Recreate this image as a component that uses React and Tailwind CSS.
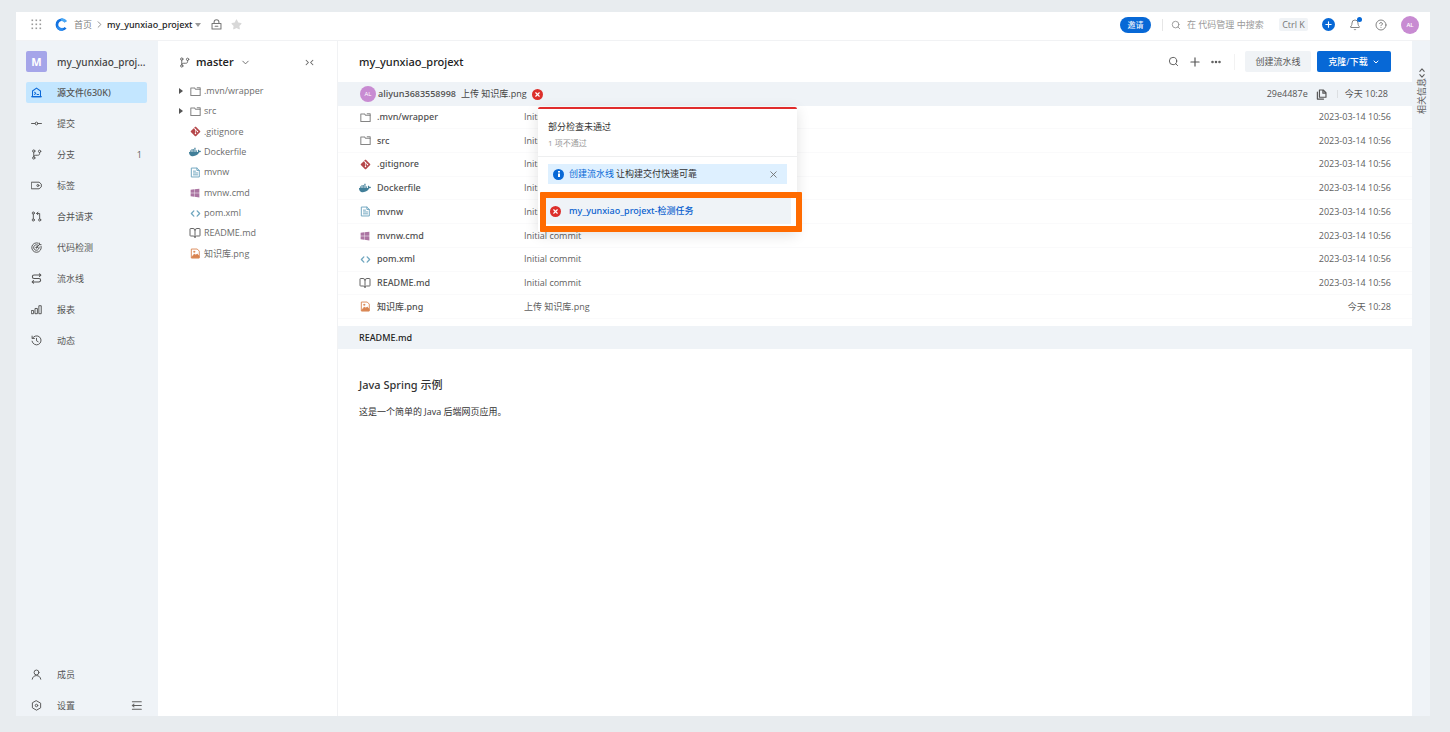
import React from "react";
import {
  BookOpen, ChevronDown, ChevronRight, Search, Plus, X, CircleHelp, Bell, Ellipsis,
} from "lucide-react";
import { FaDocker, FaGitAlt, FaStar, FaWindows } from "react-icons/fa6";

const strong = "font-['Noto_Sans','Noto_Sans_CJK_SC',sans-serif] font-medium";

function Icon({ size = 11, width = 1.4, className = "", children }) {
  return (
    <svg
      width={size}
      height={size}
      viewBox="0 0 16 16"
      fill="none"
      stroke="currentColor"
      strokeWidth={width}
      strokeLinecap="round"
      strokeLinejoin="round"
      className={`shrink-0 ${className}`}
      aria-hidden="true"
    >
      {children}
    </svg>
  );
}

const SourceIcon = () => (
  <Icon width={1.5} className="text-[#0b68d8]">
    <path d="M2.2 5.800 8 1.600l5.800 4.200V14H2.200z" />
    <path d="M5.200 7.600 7 9.200l-1.800 1.600M8.800 11h2.200" />
    <path d="M1 14h14" />
  </Icon>
);
const CommitIcon = () => (
  <Icon>
    <circle cx="8" cy="8" r="2" />
    <path d="M.8 8H6M10 8h5.2" />
  </Icon>
);
const BranchIcon = () => (
  <Icon>
    <circle cx="4" cy="3" r="1.7" />
    <circle cx="12.500" cy="3.4" r="1.7" />
    <circle cx="4" cy="13" r="1.7" />
    <path d="M4 4.700v6.600M12.500 5.100v1.400c0 2-1 2.600-2.800 2.600H6.900C5.100 9.100 4 9.900 4 11.300" />
  </Icon>
);
const TagIcon = () => (
  <Icon>
    <path d="M1 3.2h10.8L15 6v4l-3.2 2.8H1z" />
    <circle cx="10" cy="8" r="1.5" />
  </Icon>
);
const MergeIcon = () => (
  <Icon>
    <circle cx="3.4" cy="3" r="1.6" />
    <circle cx="3.4" cy="13" r="1.6" />
    <circle cx="12.6" cy="13" r="1.6" />
    <path d="M3.4 4.6v6.8M12.6 11.4V3.6H8.4M10.2 1.6l-2 2 2 2" />
  </Icon>
);
const ScanIcon = () => (
  <Icon>
    <path d="M10.500 1.600a6.900 6.900 0 1 0 4.200 4.600" />
    <path d="M9.8 4.500a4 4 0 1 0 2 2.800" />
    <path d="m8 8 4.200-4.200M12.200 3.800V1.600M12.200 3.800h2.400" />
    <circle cx="8" cy="8" r="1" />
  </Icon>
);
const PipelineIcon = () => (
  <Icon width={1.6}>
    <path d="M14 3H4.5a2.5 2.5 0 0 0 0 5h7a2.5 2.5 0 0 1 0 5H2" />
    <path d="M12.3 1.2 14.2 3l-1.9 1.8M3.7 11.2 1.8 13l1.9 1.8" />
  </Icon>
);
const ChartIcon = () => (
  <Icon width={1.4}>
    <path d="M1 9.500h2.800v4.600H1zM6.400 6.500h2.900v7.600H6.400zM12 2.500h2.900v11.600H12z" />
  </Icon>
);
const HistoryIcon = () => (
  <Icon>
    <path d="M2.2 4.6A6.6 6.6 0 1 1 1.5 9" />
    <path d="M1.6 1.6v3.4H5M8 4.8v3.6l2.4 1.4" />
  </Icon>
);
const MemberIcon = () => (
  <Icon>
    <circle cx="8" cy="5" r="3.5" />
    <path d="M1.8 14.8c.5-3.2 2.8-5.2 6.2-5.2s5.700 2 6.200 5.200" />
  </Icon>
);
const SettingIcon = () => (
  <Icon>
    <path d="M8 1.200 14 4.600v6.800L8 14.800 2 11.400V4.600z" />
    <circle cx="8" cy="8" r="1.800" />
  </Icon>
);
const CollapseIcon = () => (
  <Icon width={1.500}>
    <path d="M2 2.500h13M3 8h12M2 13.500h13" />
    <path d="M4.200 5.600 1.200 8l3 2.400z" fill="currentColor" strokeWidth="0.500" />
  </Icon>
);
const FolderIcon = () => (
  <Icon width={1.500} className="text-[#858585]">
    <path d="M1.200 2.800h5.300l1.600 2h6.700v8.900H1.200z" />
    <path d="M10.500 2.400h4.300v2.400" />
  </Icon>
);
const DocIcon = () => (
  <Icon width={1.400} className="text-[#6fa6bf]">
    <path d="M2.500 1.500h7.500l3.500 3.500v9.500h-11z" />
    <path d="M10 1.500V5h3.500M5 6h3M5 8.700h6M5 11.400h6" />
  </Icon>
);
const XmlIcon = () => (
  <Icon width={1.900} className="text-[#6fa6bf]">
    <path d="M5.600 4.200 2 8l3.600 3.800M10.400 4.200 14 8l-3.600 3.800" />
  </Icon>
);
const ImageIcon = () => (
  <Icon width={1.300} className="text-[#d98350]">
    <path d="M2.500 1.500h8l3 3v10h-11z" />
    <path d="M3 12.800 6.500 8.600l2 2 2-1.800 2.600 3v2.300H3z" fill="currentColor" />
    <circle cx="6" cy="5.500" r="0.900" />
  </Icon>
);

const fileIcons = {
  folder: <FolderIcon />,
  git: <FaGitAlt size={11} className="text-[#b5474a]" />,
  docker: <FaDocker size={12} className="text-[#417f99]" />,
  doc: <DocIcon />,
  windows: <FaWindows size={10} className="text-[#ab75a2]" />,
  xml: <XmlIcon />,
  book: <BookOpen size={12} strokeWidth={2} className="text-[#666]" />,
  image: <ImageIcon />,
};

const files = [
  [".mvn/wrapper", "folder"],
  ["src", "folder"],
  [".gitignore", "git"],
  ["Dockerfile", "docker"],
  ["mvnw", "doc"],
  ["mvnw.cmd", "windows"],
  ["pom.xml", "xml"],
  ["README.md", "book"],
  ["知识库.png", "image"],
];

const menu = [
  ["源文件(630K)", SourceIcon],
  ["提交", CommitIcon],
  ["分支", BranchIcon, "1"],
  ["标签", TagIcon],
  ["合并请求", MergeIcon],
  ["代码检测", ScanIcon],
  ["流水线", PipelineIcon],
  ["报表", ChartIcon],
  ["动态", HistoryIcon],
];

function ErrorDot() {
  return (
    <span className="flex size-[11px] shrink-0 items-center justify-center rounded-full bg-[#dc2f2b] text-white">
      <X size={7} strokeWidth={4} />
    </span>
  );
}

function Header() {
  return (
    <header className="flex h-[29px] shrink-0 items-center border-b border-[#f1f2f4] bg-white pr-[11px] pb-[3px] pl-[15px]">
      <button type="button" aria-label="应用" className="text-[#999]">
        <svg width="11" height="11" viewBox="0 0 11 11" fill="currentColor">
          {[1, 5, 9].map((y) => [1, 5, 9].map((x) => <rect key={`${x}${y}`} x={x - 0.5} y={y - 0.5} width="1.600" height="1.600" />))}
        </svg>
      </button>
      <svg width="13" height="13" viewBox="0 0 24 24" fill="none" className="ml-[13px]" aria-hidden="true">
        <path d="M19.500 6.500A9 9 0 1 0 19.500 18" stroke="#1272e0" strokeWidth="5" />
        <path d="M11 3.200c4-.6 7 .8 9 4" stroke="#4aa8f5" strokeWidth="5" />
        <path d="M4.500 16c2 3.500 6 5.500 10 4.600" stroke="#2b8cf0" strokeWidth="5" />
      </svg>
      <nav className="ml-[6px] flex items-center">
        <a href="#home" className="text-[#808080]">首页</a>
        <ChevronRight size={11} className="mx-[2px] text-[#888]" />
        <button type="button" className={`flex items-center gap-[2px] text-[#222] ${strong}`}>
          my_yunxiao_projext
          <svg width="6" height="4" viewBox="0 0 6 4" fill="#999"><path d="M0 0h6L3 4z" /></svg>
        </button>
      </nav>
      <Icon width={1.500} className="ml-[10px] text-[#777]">
        <path d="M1.500 6.500h13v8h-13zM4.500 6.300V4.500a3.500 3.500 0 0 1 7 0v1.800M6 10.500h4" />
      </Icon>
      <button type="button" aria-label="收藏" className="ml-[9px] text-[#d8d8d8]"><FaStar size={11} /></button>

      <div className="ml-auto flex items-center">
        <button type="button" className="h-4 w-[31px] rounded-full bg-[#0768d6] text-[8px] text-white">邀请</button>
        <span className="mr-2 ml-[11px] h-3 w-px bg-[#e6e6e6]" />
        <label className="flex items-center">
          <Search size={10} className="text-[#8c8c8c]" />
          <input
            aria-label="搜索"
            placeholder="在 代码管理 中搜索"
            className="ml-[6px] w-[92px] bg-transparent outline-none placeholder:text-[#999]"
          />
        </label>
        <kbd className="h-[13px] w-[29px] rounded-xs bg-[#f0f3f6] text-center font-[inherit] leading-[13px] text-[#777]">Ctrl K</kbd>
        <button type="button" aria-label="新建" className="ml-[14px] flex size-[13px] items-center justify-center rounded-full bg-[#0768d6] text-white">
          <Plus size={9} strokeWidth={3} />
        </button>
        <button type="button" aria-label="通知" className="relative ml-[14px] text-[#777]">
          <Bell size={12} strokeWidth={1.800} />
          <span className="absolute -top-[2px] -right-[1px] size-[5px] rounded-full bg-[#0768d6]" />
        </button>
        <button type="button" aria-label="帮助" className="ml-[14px] text-[#777]"><CircleHelp size={12} strokeWidth={1.800} /></button>
        <span className="ml-[14px] flex size-[18px] items-center justify-center rounded-full bg-[#c88bd2] text-[6px] font-semibold text-white">AL</span>
      </div>
    </header>
  );
}

function MenuItem({ label, icon: Glyph, active, children }) {
  return (
    <div className={`flex h-[21px] items-center rounded-xs px-[5px] ${active ? "bg-[#c3e6ff]" : ""}`}>
      <a href="#menu" className={`flex flex-1 items-center gap-[15px] text-[#555] ${active ? strong : ""}`}>
        <Glyph />
        {label}
      </a>
      {children}
    </div>
  );
}

function Sidebar() {
  return (
    <aside className="flex w-[142px] shrink-0 flex-col bg-[#eff3f7] pt-[10px] pr-[11px] pl-[10px] text-[#606060]">
      <div className="mb-[10px] flex h-[21px] items-center gap-[10px]">
        <span className="flex size-[21px] items-center justify-center rounded-xs bg-[#a5a5e9] text-[11px] font-bold text-white">M</span>
        <span className={`text-[10px] whitespace-nowrap text-[#444] ${strong}`}>my_yunxiao_proj...</span>
      </div>
      <nav className="flex flex-col gap-[10px]">
        {menu.map(([label, icon, count], i) => (
          <MenuItem key={label} label={label} icon={icon} active={i === 0}>
            {count && <span>{count}</span>}
          </MenuItem>
        ))}
      </nav>
      <nav className="mt-auto flex flex-col gap-[10px]">
        <MenuItem label="成员" icon={MemberIcon} />
        <MenuItem label="设置" icon={SettingIcon}>
          <button type="button" aria-label="收起"><CollapseIcon /></button>
        </MenuItem>
      </nav>
    </aside>
  );
}

function Tree() {
  return (
    <section className="w-[180px] shrink-0 border-r border-[#f1f2f4]">
      <div className="flex h-10 items-center pt-[2px] pr-[23px] pl-[21px] text-[#666]">
        <BranchIcon />
        <button type="button" className="ml-[6px] flex items-center gap-[6px] text-[11px] font-semibold text-[#222]">
          master
          <ChevronDown size={11} className="text-[#666]" />
        </button>
        <button type="button" aria-label="收起目录" className="ml-auto">
          <Icon size={9} width={1.800}><path d="m2 4 4 4-4 4M14 4l-4 4 4 4" /></Icon>
        </button>
      </div>
      <ul className="grid h-[183px] auto-rows-fr">
        {files.map(([name, kind]) => (
          <li key={name} className="flex items-center pl-[21px] text-[#6c6c6c]">
            <span className="w-[10px]">
              {kind === "folder" && <svg width="4" height="6" viewBox="0 0 4 6" fill="#555"><path d="M0 0v6l4-3z" /></svg>}
            </span>
            <span className="mr-[3px] flex w-3 justify-center">{fileIcons[kind]}</span>
            <a href="#file">{name}</a>
          </li>
        ))}
      </ul>
    </section>
  );
}

function CheckPopup() {
  return (
    <div className="absolute top-[25px] left-[200px] z-10 w-[259px] rounded-xs border-t-2 border-[#e02b2b] bg-white shadow-[0_3px_14px_rgba(0,0,0,0.12)]">
      <div className="h-12 border-b border-[#eeeff0] pt-[10px] pl-[10px]">
        <p className="leading-[15px] text-[#333]">部分检查未通过</p>
        <p className="mt-[2px] text-[8px] leading-[14px] text-[#999]">1 项不通过</p>
      </div>
      <div className="mx-[10px] mt-[7px] flex h-5 items-center bg-[#def0ff] pr-2 pl-[5px] text-[#333]">
        <span className="flex size-[11px] items-center justify-center rounded-full bg-[#0768d6] text-white">
          <svg width="2" height="6" viewBox="0 0 2 6" fill="currentColor"><path d="M0 0h2v1.400H0zM0 2.400h2V6H0z" /></svg>
        </span>
        <a href="#pipeline" className="ml-[5px] text-[#0768d6]">创建流水线</a>
        <span className="ml-[2px]">让构建交付快速可靠</span>
        <button type="button" aria-label="关闭" className="ml-auto text-[#666]"><X size={11} strokeWidth={1.800} /></button>
      </div>
      <div className="mt-2 mr-[-5px] ml-[2px] rounded-[1px] border-[6px] border-[#ff6b00] bg-white pr-[5px] pb-[2px]">
        <div className="flex h-[26px] items-center gap-2 bg-[#eff3f7] pl-1">
          <ErrorDot />
          <a href="#task" className={`text-[#0b62cf] ${strong}`}>my_yunxiao_projext-检测任务</a>
        </div>
      </div>
    </div>
  );
}

function Main() {
  return (
    <main className="min-w-0 flex-1">
      <div className="flex h-[41px] items-center pr-[21px] pl-[21px]">
        <h1 className={`text-[11px] text-[#222] ${strong}`}>my_yunxiao_projext</h1>
        <div className="ml-auto flex items-center text-[#555]">
          <button type="button" aria-label="搜索文件"><Search size={11} /></button>
          <button type="button" aria-label="添加" className="ml-[9px]"><Plus size={14} /></button>
          <button type="button" aria-label="更多" className="ml-2"><Ellipsis size={12} strokeWidth={3} /></button>
          <span className="mr-[10px] ml-3 h-4 w-px bg-[#f2f2f2]" />
          <button type="button" className="h-[21px] w-[66px] rounded-xs bg-[#f0f3f6]">创建流水线</button>
          <button type="button" className="ml-[6px] flex h-[21px] w-[74px] items-center justify-center gap-1 rounded-xs bg-[#0768d6] font-medium text-white">
            克隆/下载 <ChevronDown size={8} strokeWidth={3} />
          </button>
        </div>
      </div>

      <div className="relative flex h-6 items-center bg-[#eff3f7] pr-6 pl-[22px] text-[#555]">
        <span className="flex size-4 items-center justify-center rounded-full bg-[#c88bd2] text-[6px] text-white">AL</span>
        <span className="ml-[2px] font-semibold">aliyun3683558998</span>
        <a href="#commit" className="mx-[5px] text-[#444]">上传 知识库.png</a>
        <ErrorDot />
        <span className="ml-auto">29e4487e</span>
        <button type="button" aria-label="复制" className="ml-2">
          <Icon width={1.700}>
            <path d="M5 1.500h5.500l4 4v6.500H5zM10 1.500v4.500h4.500M2 4.500v10.200h9" />
          </Icon>
        </button>
        <span className="mx-[7px] ml-[10px] h-2 w-px bg-[#dcdfe2]" />
        <time>今天 10:28</time>
        <CheckPopup />
      </div>

      <table className="h-[213px] w-full table-fixed">
        <tbody>
          {files.map(([name, kind], i) => (
            <tr key={name} className="border-b border-[#fafafb] text-[#606060]">
              <td className="w-[186px] pl-[21px]">
                <div className="flex items-center gap-[6px]">
                  <span className="flex w-3 justify-center">{fileIcons[kind]}</span>
                  <a href="#file" className={`text-[#505050] ${strong}`}>{name}</a>
                </div>
              </td>
              <td>{i === 8 ? "上传 知识库.png" : "Initial commit"}</td>
              <td className="w-[120px] pr-[21px] text-right">{i === 8 ? "今天 10:28" : "2023-03-14 10:56"}</td>
            </tr>
          ))}
        </tbody>
      </table>

      <article className="mt-[7px] text-[#333]">
        <h2 className={`flex h-[23px] items-center bg-[#eff3f7] pl-[21px] text-[#222] ${strong}`}>README.md</h2>
        <div className="px-[21px] pt-7">
          <h3 className={`text-[11px] leading-4 text-[#333] ${strong}`}>Java Spring 示例</h3>
          <p className="mt-3 leading-[14px]">这是一个简单的 Java 后端网页应用。</p>
        </div>
      </article>
    </main>
  );
}

export default function App() {
  return (
    <div className="flex min-h-screen flex-col bg-[#e8ecef] pt-3 pr-5 pb-4 pl-4 font-['Open_Sans','Noto_Sans_CJK_SC',sans-serif] text-[9px] leading-[14px]">
      <div className="flex flex-1 flex-col bg-white">
        <Header />
        <div className="flex flex-1">
          <Sidebar />
          <Tree />
          <Main />
          <aside className="w-[18px] shrink-0 bg-[#eff3f7] pt-[27px] text-[#606060]">
            <button type="button" className="flex w-full flex-col items-center pl-[2px]">
              <Icon size={10} width={1.700}><path d="m4.500 5.500 3.500-4 3.500 4M4.500 10.500l3.500 4 3.500-4" /></Icon>
              <span className="rotate-180 [text-orientation:sideways] [writing-mode:vertical-rl]">相关信息</span>
            </button>
          </aside>
        </div>
      </div>
    </div>
  );
}
